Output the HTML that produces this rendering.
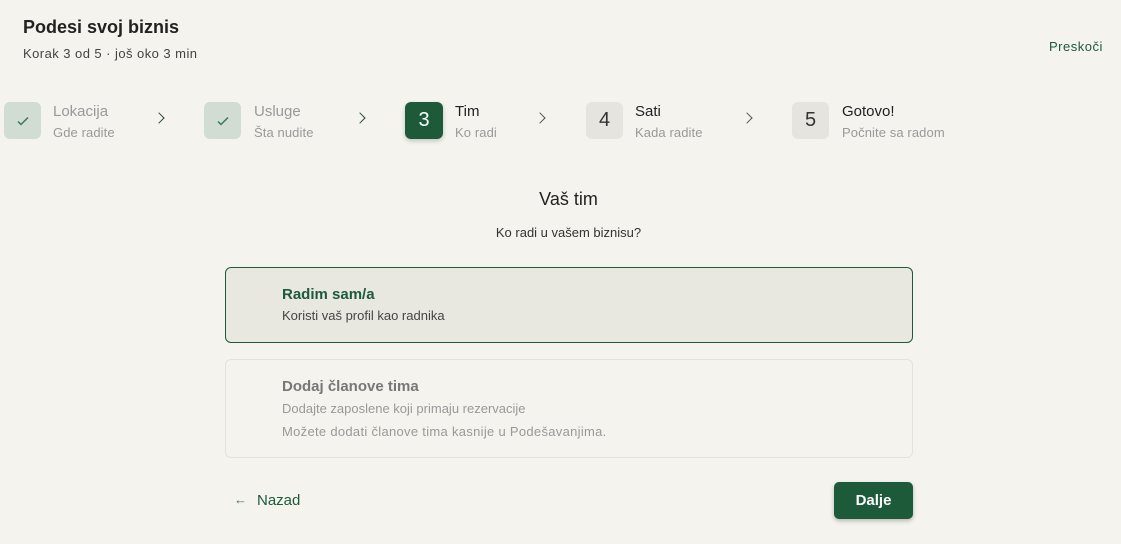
<!DOCTYPE html><html><head><style>
body{margin:0;width:1121px;height:544px;background:#f4f3ee;font-family:"Liberation Sans",sans-serif;position:relative;overflow:hidden;color:#222}
.a{position:absolute}
.box{position:absolute;top:102px;width:37px;height:37px;border-radius:6px;display:flex;align-items:center;justify-content:center;font-size:20px}
.done{background:#d1ddd3}
.cur{background:#1d5a3a;color:#fff;box-shadow:0 2px 5px rgba(0,0,0,.2)}
.todo{background:#e6e4df;color:#333}
.t{position:absolute;top:103px;font-size:15px}
.s{position:absolute;top:125px;font-size:13px;color:#999;letter-spacing:.1px}
.ch{position:absolute;top:114px;width:7px;height:7px;border-right:1.5px solid #2a4a3a;border-top:1.5px solid #2a4a3a;transform:rotate(45deg)}
</style></head><body>
<div class="a" style="left:23px;top:17px;font-size:18px;font-weight:bold;color:#222">Podesi svoj biznis</div>
<div class="a" style="left:23px;top:46px;font-size:13px;color:#444;letter-spacing:.45px">Korak 3 od 5 · još oko 3 min</div>
<div class="a" style="left:1049px;top:39px;font-size:13px;color:#1d5a3a;letter-spacing:.5px">Preskoči</div>

<div class="box done" style="left:4px"><svg width="14" height="14" viewBox="0 0 14 14"><path d="M2 7.5l3 3 7-7" fill="none" stroke="#3a7a55" stroke-width="1.5"/></svg></div>
<div class="t" style="left:53px;color:#999">Lokacija</div><div class="s" style="left:53px">Gde radite</div>
<div class="ch" style="left:155px"></div>
<div class="box done" style="left:204px"><svg width="14" height="14" viewBox="0 0 14 14"><path d="M2 7.5l3 3 7-7" fill="none" stroke="#3a7a55" stroke-width="1.5"/></svg></div>
<div class="t" style="left:254px;color:#999">Usluge</div><div class="s" style="left:254px">Šta nudite</div>
<div class="ch" style="left:356px"></div>
<div class="box cur" style="left:405px;width:38px">3</div>
<div class="t" style="left:455px;color:#222">Tim</div><div class="s" style="left:455px">Ko radi</div>
<div class="ch" style="left:536px;border-color:#555"></div>
<div class="box todo" style="left:586px">4</div>
<div class="t" style="left:635px;color:#222">Sati</div><div class="s" style="left:635px">Kada radite</div>
<div class="ch" style="left:743px;border-color:#555"></div>
<div class="box todo" style="left:792px">5</div>
<div class="t" style="left:842px;color:#222">Gotovo!</div><div class="s" style="left:842px">Počnite sa radom</div>

<div class="a" style="left:0;width:1137px;top:189px;text-align:center;font-size:18px;color:#222">Vaš tim</div>
<div class="a" style="left:0;width:1137px;top:225px;text-align:center;font-size:13px;color:#333">Ko radi u vašem biznisu?</div>

<div class="a" style="left:225px;top:267px;width:686px;height:74px;border:1px solid #1d5a3a;border-radius:6px;background:#e8e8e1"></div>
<div class="a" style="left:282px;top:286px;font-size:15px;font-weight:bold;color:#1d5a3a">Radim sam/a</div>
<div class="a" style="left:282px;top:308px;font-size:13px;color:#444">Koristi vaš profil kao radnika</div>

<div class="a" style="left:225px;top:359px;width:686px;height:97px;border:1px solid #e4e2dc;border-radius:6px"></div>
<div class="a" style="left:282px;top:378px;font-size:15px;font-weight:bold;color:#777">Dodaj članove tima</div>
<div class="a" style="left:282px;top:401px;font-size:13px;color:#999">Dodajte zaposlene koji primaju rezervacije</div>
<div class="a" style="left:282px;top:424px;font-size:13px;color:#999;letter-spacing:.3px">Možete dodati članove tima kasnije u Podešavanjima.</div>

<div class="a" style="left:234px;top:492px;font-size:13px;color:#3a7a55">←</div>
<div class="a" style="left:257px;top:492px;font-size:15px;color:#1d5a3a">Nazad</div>
<div class="a" style="left:834px;top:482px;width:79px;height:37px;background:#1d5a3a;border-radius:5px;color:#fff;font-size:15px;font-weight:bold;display:flex;align-items:center;justify-content:center;box-shadow:0 2px 4px rgba(0,0,0,.25)">Dalje</div>
</body></html>
